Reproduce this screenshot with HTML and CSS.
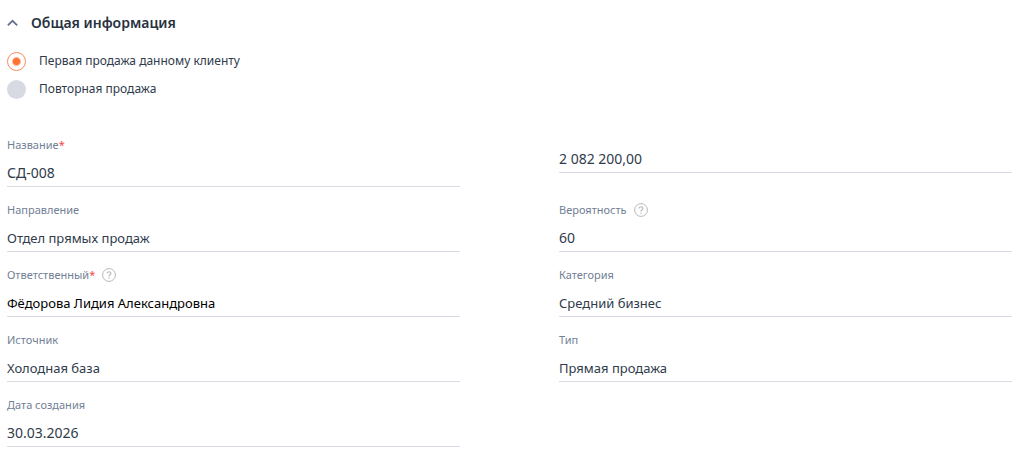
FILE: index.html
```html
<!DOCTYPE html>
<html lang="ru">
<head>
    <meta charset="UTF-8">
    <meta name="viewport" content="width=device-width, initial-scale=1.0">
    <title>Общая информация</title>
    <link rel="stylesheet" href="styles.css">
</head>
<body>
    <form class="section">
        <h2 class="section-title">
            <button type="button" class="toggle">
                <svg class="toggle-icon" width="11" height="8" viewBox="0 0 11 8" fill="none" stroke="#64708f" stroke-width="1.7">
                    <path d="M0.8 6.4L5.5 1.8L10.2 6.4"/>
                </svg>
                Общая информация
            </button>
        </h2>

        <div class="radio-group">
            <label class="radio"><input type="radio" name="sale" checked>Первая продажа данному клиенту</label>
            <label class="radio"><input type="radio" name="sale">Повторная продажа</label>
        </div>

        <div class="columns">
            <div class="column">
                <div class="field">
                    <label for="name">Название<span class="required">*</span></label>
                    <input type="text" id="name" class="number" value="СД-008">
                </div>
                <div class="field">
                    <label for="direction">Направление</label>
                    <input type="text" id="direction" value="Отдел прямых продаж">
                </div>
                <div class="field">
                    <label for="owner">Ответственный<span class="required">*</span>
                        <svg class="help" width="14" height="14" viewBox="0 0 14 14" fill="none" stroke="#b8b8b8">
                            <circle cx="7" cy="7" r="6.4"/>
                            <path d="M5.2 5.5C5.2 3.2 8.9 3.2 8.9 5.4C8.9 6.8 7 6.7 7 8.4M7 9.5V10.7" stroke-width="1.2"/>
                        </svg>
                    </label>
                    <input type="text" id="owner" class="owner" value="Фёдорова Лидия Александровна">
                </div>
                <div class="field">
                    <label for="source">Источник</label>
                    <input type="text" id="source" value="Холодная база">
                </div>
                <div class="field">
                    <label for="created">Дата создания</label>
                    <input type="text" id="created" class="number" value="30.03.2026">
                </div>
            </div>

            <div class="column">
                <div class="field field-amount">
                    <input type="text" id="amount" class="number" aria-label="Сумма" value="2 082 200,00">
                </div>
                <div class="field">
                    <label for="probability">Вероятность
                        <svg class="help" width="14" height="14" viewBox="0 0 14 14" fill="none" stroke="#b8b8b8">
                            <circle cx="7" cy="7" r="6.4"/>
                            <path d="M5.2 5.5C5.2 3.2 8.9 3.2 8.9 5.4C8.9 6.8 7 6.7 7 8.4M7 9.5V10.7" stroke-width="1.2"/>
                        </svg>
                    </label>
                    <input type="text" id="probability" class="number" value="60">
                </div>
                <div class="field">
                    <label for="category">Категория</label>
                    <input type="text" id="category" value="Средний бизнес">
                </div>
                <div class="field">
                    <label for="type">Тип</label>
                    <input type="text" id="type" value="Прямая продажа">
                </div>
            </div>
        </div>
    </form>
</body>
</html>
```

FILE: styles.css
```css
body {
    margin: 0;
    background: #fff;
    color: #303b4b;
    font-family: "Noto Sans", "Open Sans", sans-serif;
    font-size: 13px;
}
.section {
    padding: 13px 12px 0 7px;
}
.section-title {
    margin: 0;
    font-size: 14px;
}
.toggle {
    display: flex;
    align-items: center;
    gap: 13px;
    padding: 0;
    border: none;
    background: none;
    color: #28323f;
    font: inherit;
    font-weight: 600;
    line-height: 20px;
    cursor: pointer;
}
.radio-group {
    display: flex;
    flex-direction: column;
    gap: 8px;
    margin-top: 18px;
}
.radio {
    display: flex;
    align-items: center;
    gap: 13px;
    font-size: 12px;
    line-height: 20px;
    cursor: pointer;
}
.radio input {
    appearance: none;
    width: 19px;
    height: 19px;
    margin: 0;
    border-radius: 50%;
    background: #d7dae2;
}
.radio input:checked {
    border: 1px solid #fa8a5c;
    background: radial-gradient(circle, #ff7033 3px, #fff 5px);
}
.columns {
    display: grid;
    grid-template-columns: 1fr 1fr;
    gap: 99px;
    margin-top: 38px;
}
.column {
    display: flex;
    flex-direction: column;
    gap: 15px;
}
.field {
    display: flex;
    flex-direction: column;
    gap: 8px;
    height: 50px;
}
.field label {
    display: flex;
    align-items: center;
    color: #728096;
    font-size: 11px;
    line-height: 16px;
}
.field input {
    width: 100%;
    height: 26px;
    box-sizing: border-box;
    padding: 0 0 2px;
    border: none;
    border-bottom: 1px solid #d9dbe4;
    outline: none;
    background: none;
    color: #303b4b;
    font: inherit;
}
.field .owner {
    color: #000;
}
.field .number {
    font-size: 14px;
}
.field-amount {
    padding-top: 10px;
    box-sizing: border-box;
}
.required {
    color: #f5443f;
}
.help {
    margin-left: 7px;
}
```
